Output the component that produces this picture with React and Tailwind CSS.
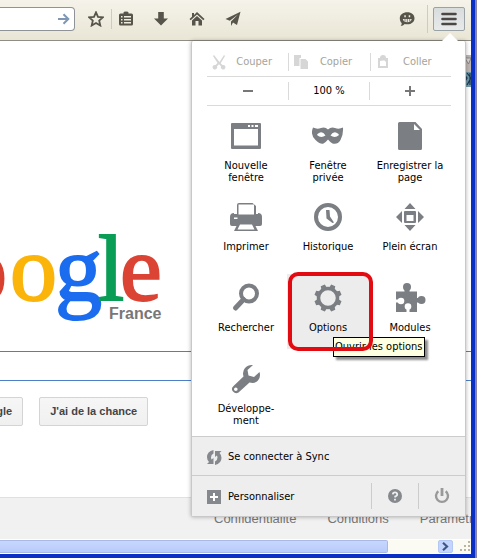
import React from 'react';

const uiFont = "font-['DejaVu_Sans_Condensed','DejaVu_Sans',sans-serif]";
const pageFont = "font-['Liberation_Sans',Arial,sans-serif]";

function ToolButton({ label, className, children }) {
  return (
    <button type="button" aria-label={label} className={`flex shrink-0 items-center justify-center text-[#57544b] ${className}`}>
      <svg width="16" height="16" viewBox="0 0 16 16" fill="currentColor" aria-hidden="true">
        {children}
      </svg>
    </button>
  );
}

function Toolbar() {
  return (
    <header className="flex h-[41px] items-center border-b border-[#8f8d85] bg-linear-to-b from-[#f5f3ea] to-[#e9e6d6] pr-[6px] pb-[2px]">
      <div className="flex h-6 w-[75px] items-center justify-end rounded-r-sm border border-l-0 border-[#8f9296] bg-white pr-1">
        <input aria-label="Adresse" className="h-5 w-0 flex-1 outline-none" />
        <button type="button" aria-label="Aller">
          <svg width="13" height="12" viewBox="0 0 13 12" fill="none" stroke="#7f97b3" strokeWidth="2" aria-hidden="true">
            <path d="M1 6h10M6.500 1.200 11.300 6 6.500 10.800" />
          </svg>
        </button>
      </div>
      <ToolButton label="Marque-page" className="ml-[13px]">
        <path d="M8 1.300l2 4.500 4.900.5-3.700 3.300 1.100 4.900L8 12l-4.300 2.500 1.100-4.900L1.100 6.300 6 5.800z" fill="none" stroke="currentColor" strokeWidth="1.800" />
      </ToolButton>
      <span className="ml-[7px] h-5 w-px bg-[#cfccbf]" />
      <ToolButton label="Liste des marque-pages" className="ml-[6px]">
        <path fillRule="evenodd" d="M2.500 2.500H5.500V1.500Q5.500 .5 8 .5T10.500 1.500V2.500H13.500Q15 2.500 15 4V13Q15 14.500 13.500 14.500H2.500Q1 14.500 1 13V4Q1 2.500 2.500 2.500zM3 5V6.500H4.500V5zM6 5V6.500H13V5zM3 8V9.500H4.500V8zM6 8V9.500H13V8zM3 11V12.500H4.500V11zM6 11V12.500H13V11z" />
      </ToolButton>
      <ToolButton label="Téléchargements" className="ml-[19px]">
        <path d="M5.200 1h5.600v6.500H15L8 14.500 1 7.500h4.200z" />
      </ToolButton>
      <ToolButton label="Accueil" className="ml-5">
        <path d="M8 1 15.500 8l-1.200 1.300L8 3.500 1.700 9.300.5 8 3 5.700V2h2v2zM3 9.500 8 5l5 4.500v5H9.500V10h-3v4.500H3z" />
      </ToolButton>
      <ToolButton label="Partager" className="ml-5">
        <path d="M15.500.8 12 14 8 11.500 6 15V10.500L13 3.500 4.800 9.700.5 8z" />
      </ToolButton>
      <ToolButton label="Discussion" className="mr-[12px] ml-auto">
        <path fillRule="evenodd" d="M8.300 1.200c4.300 0 7.200 2.500 7.200 6s-2.900 6.100-7.200 6.100c-1 0-1.900-.1-2.600-.3-1 1.200-2.500 2-4.200 2 .8-.8 1.200-1.700 1.200-3C1.500 10.900.8 9.300.8 7.200c0-3.500 3.200-6 7.500-6zM5.300 4.300v2h1.500V4.300zM9.700 4.300v2h1.500V4.300zM3.800 8c.5 2.200 2.200 3.300 4.500 3.300S12.200 10.200 12.700 8z" />
        <path d="M6 8v2.500M8.300 8v3.300M10.700 8v2.500" stroke="currentColor" strokeWidth="0.700" />
      </ToolButton>
      <span className="mr-[5px] h-7 w-px bg-[#cfccbf]" />
      <button type="button" aria-label="Ouvrir le menu" className="flex h-6 w-8 shrink-0 items-center justify-center rounded-xs border border-[#9ba2a6] bg-linear-to-b from-[#d9dcdd] to-[#e8eaea]">
        <svg width="16" height="14" viewBox="0 0 16 14" stroke="#4b4744" strokeWidth="2.600" strokeLinecap="round" aria-hidden="true">
          <path d="M1.500 2h13M1.500 7h13M1.500 12h13" />
        </svg>
      </button>
    </header>
  );
}

function Logo() {
  return (
    <svg width="170" height="100" viewBox="0 0 170 100" role="img" aria-label="Google France" className="block">
      <g fontFamily="'Liberation Serif', serif" fontSize="94" strokeWidth="2">
        <text x="-40" y="70" fill="#d8402f" stroke="#d8402f">o</text>
        <text x="10" y="70" fill="#fbb40a" stroke="#fbb40a">o</text>
        <text x="55" y="70" fill="#1b6cee" stroke="#1b6cee">g</text>
        <text x="98" y="70" fill="#0a9d55" stroke="#0a9d55">l</text>
        <text x="120" y="70" fill="#db4434" stroke="#db4434">e</text>
      </g>
      <text x="109" y="89" fill="#777777" fontFamily="'Liberation Sans', Arial, sans-serif" fontSize="16" fontWeight="bold">France</text>
    </svg>
  );
}

function SearchPage() {
  const button = 'h-[29px] shrink-0 rounded-xs border border-[#d4d4d4] bg-linear-to-b from-[#f6f6f6] to-[#f0f0f0] px-[10px] text-[11px] font-bold whitespace-nowrap text-[#444]';
  return (
    <main className={`flex flex-1 flex-col overflow-hidden bg-white ${pageFont}`}>
      <div className="flex h-[46px] items-end justify-end">
        <svg width="7" height="32" viewBox="0 0 7 32" aria-hidden="true">
          <path d="M0 0h7v17H0z" fill="#bdb5b1" />
          <path d="M1 3h6L4.500 9z" fill="#d6d3d2" stroke="#777" strokeWidth="0.800" />
          <path d="M0 17h7v15H0z" fill="#6f98a6" />
          <path d="M0 19l3 4-3 5M3 18l4 5-4 7M6 18v12" stroke="#1d3450" strokeWidth="1.200" fill="none" />
        </svg>
      </div>
      <div className="mt-[143px]">
        <Logo />
      </div>
      <input aria-label="Rechercher" className="mt-[21px] h-[30px] w-full border-y border-[#4c7fc8] px-2 outline-none" />
      <div className="mt-4 flex gap-4">
        <button type="button" className={`-ml-24 ${button}`}>Recherche Google</button>
        <button type="button" className={button}>J'ai de la chance</button>
      </div>
      <footer className="mt-auto flex h-[42px] items-center gap-[31px] overflow-hidden border-t border-[#e0e0e0] bg-[#f1f1f1] pl-[214px] text-[13px] whitespace-nowrap text-[#777]">
        <a href="#confidentialite">Confidentialité</a>
        <a href="#conditions">Conditions</a>
        <a href="#parametres">Paramètres</a>
      </footer>
    </main>
  );
}

function ScrollBar() {
  return (
    <div className="flex h-[15px] items-stretch border-y border-white bg-[#fbfaf3]">
      <div className="w-[388px] rounded-r-xs border border-l-0 border-[#a9b8e6] bg-linear-to-b from-[#c6d7ff] to-[#b8ccfa]" />
      <button type="button" aria-label="Défiler à droite" className="mr-[6px] ml-auto flex w-[15px] items-center justify-center rounded-xs border border-[#b4c8f4] bg-[#c4d5fd]">
        <svg width="7" height="9" viewBox="0 0 7 9" fill="none" stroke="#3f5583" strokeWidth="2.200" aria-hidden="true">
          <path d="M1 .8 5 4.500 1 8.200" />
        </svg>
      </button>
      <svg width="12" height="13" viewBox="0 0 12 13" fill="#b9b59f" aria-hidden="true">
        <path d="M9 1h2v2H9zM5 5h2v2H5zM9 5h2v2H9zM1 9h2v2H1zM5 9h2v2H5zM9 9h2v2H9z" />
      </svg>
    </div>
  );
}

function EditButton({ label, icon, first }) {
  return (
    <button type="button" disabled className={`flex h-[18px] items-center pr-[7px] pl-1 text-[#a5a499] ${first ? '' : 'border-l border-[#dadada]'}`}>
      <svg width="16" height="16" viewBox="0 0 16 16" className="shrink-0 text-[#d6d6d6]" fill="currentColor" aria-hidden="true">
        {icon}
      </svg>
      <span className="flex-1 text-center">{label}</span>
    </button>
  );
}

const gearAngles = [22.5, 67.5, 112.5, 157.5, 202.5, 247.5, 292.5, 337.5];

const icons = {
  window: <path fillRule="evenodd" d="M2 3h28a1 1 0 011 1v24a1 1 0 01-1 1H2a1 1 0 01-1-1V4a1 1 0 011-1zM4 9v16.500h24V9zM18 5v2h2V5zM21.500 5v2h2V5zM25 5v2h3V5z" />,
  mask: <path fillRule="evenodd" d="M1 7.500Q5 9.500 9 8T16 9.500Q19 6.500 23 8T31 7.500Q31.500 15 28.500 20T20.500 23.500Q18 22 16 19.500Q14 22 11.500 23.500T3.500 20 1 7.500zM5 15Q9 18.500 13.500 15.500Q11 11.500 8 12.500T5 15zM27 15Q23 18.500 18.500 15.500Q21 11.500 24 12.500T27 15z" />,
  page: <path fillRule="evenodd" d="M5.500 2H21.500L28 9V28.500Q28 30 26.500 30H5.500Q4 30 4 28.500V3.500Q4 2 5.500 2zM20 4V10H26z" />,
  printer: (
    <>
      <path d="M9 2H22.500L26 5V13H28V12Q32 12 32 16V23Q32 25 30 25H2Q0 25 0 23V16Q0 12 4 12V13H7V4Q7 2 9 2z" />
      <path d="M8.500 3.500H24V13.500H8.500zM4 16.500h3.500v1.500H4z" fill="#ffffff" />
      <path d="M8 22H24L28 30H4z" />
      <path d="M10 23.500H22L24.500 28.500H7.500z" fill="#ffffff" />
    </>
  ),
  clock: <><circle cx="16" cy="16" r="12" fill="none" stroke="currentColor" strokeWidth="4" /><path d="M14 9h3.500l.5 6.500 4 6-1.500.5-6-4.500z" /></>,
  fullscreen: <path fillRule="evenodd" d="M16 2l5.500 6h-11zM16 30l-5.500-6h11zM2 16l6-6v12zM30 16l-6-6v12zM11 10h10q1 0 1 1V21q0 1-1 1H11q-1 0-1-1V11q0-1 1-1zM12.500 14v6h7v-6z" />,
  search: <><circle cx="19" cy="11.500" r="8" fill="none" stroke="currentColor" strokeWidth="4" /><path d="M13.500 17.500 5.500 26" fill="none" stroke="currentColor" strokeWidth="5" strokeLinecap="round" /></>,
  gear: (
    <>
      <circle cx="16" cy="16" r="9.500" fill="none" stroke="currentColor" strokeWidth="3.500" />
      {gearAngles.map((angle) => (
        <path key={angle} d="M13 6.500 13.800 2.300h4.400L19 6.500z" transform={`rotate(${angle} 16 16)`} />
      ))}
    </>
  ),
  puzzle: (
    <>
      <path d="M2 9.500H10.500V6.500H15.500V9.500H23V16H27V20.500H23V30H2z" />
      <circle cx="13" cy="5" r="4" />
      <circle cx="27.500" cy="18" r="4" />
      <g fill="#ffffff">
        <circle cx="7" cy="19" r="3.300" />
        <path d="M1 17.500h5v3H1z" />
        <circle cx="14" cy="24.500" r="3.300" />
        <path d="M12.500 25h3v6h-3z" />
      </g>
    </>
  ),
  wrench: <path fillRule="evenodd" d="M23 2 17.500 7 18.500 12.500 24 14 29.500 9Q31 14 28 17.500T19.500 19.500L8.500 29.500Q5.500 31.500 3 28.500T3.500 23L13.500 13.500Q12 8.500 15 5T23 2zM5.800 24.500a1.800 1.800 0 100 3.600 1.800 1.800 0 000-3.600z" />,
};

const items = [
  { icon: 'window', lines: ['Nouvelle', 'fenêtre'] },
  { icon: 'mask', lines: ['Fenêtre', 'privée'] },
  { icon: 'page', lines: ['Enregistrer la', 'page'] },
  { icon: 'printer', lines: ['Imprimer'] },
  { icon: 'clock', lines: ['Historique'] },
  { icon: 'fullscreen', lines: ['Plein écran'] },
  { icon: 'search', lines: ['Rechercher'] },
  { icon: 'gear', lines: ['Options'], active: true },
  { icon: 'puzzle', lines: ['Modules'] },
  { icon: 'wrench', lines: ['Développe-', 'ment'] },
];

function MenuItem({ icon, lines, active }) {
  return (
    <div className="relative h-[81px]">
      <button type="button" className={`flex w-full flex-col items-center pt-2 ${active ? 'h-[75px] bg-[#ececec]' : 'h-full'}`}>
        <svg width="32" height="32" viewBox="0 0 32 32" fill="currentColor" className="shrink-0 text-[#7b7e82]" aria-hidden="true">
          {icons[icon]}
        </svg>
        <span className="mt-2 leading-[12px] whitespace-nowrap">
          {lines.map((line) => (
            <span key={line} className="block">{line}</span>
          ))}
        </span>
      </button>
      {active && (
        <>
          <div role="tooltip" className="absolute top-[63px] left-[46px] border border-black bg-[#ffffe1] px-px leading-[18px] whitespace-nowrap shadow-[3px_3px_2px_rgba(0,0,0,0.45)]">
            Ouvrir les options
          </div>
          <div className="pointer-events-none absolute -top-[2px] left-px h-[79px] w-[85px] rounded-[10px] border-4 border-[#e30b12]" />
        </>
      )}
    </div>
  );
}

function MenuPanel() {
  return (
    <nav aria-label="Menu" className={`absolute top-[41px] right-[5px] w-[275px] rounded-xs border border-t-0 border-[#c8c8c8] bg-white text-[11px] text-black shadow-[0_0_4px_rgba(0,0,0,0.3)] ${uiFont}`}>
      <svg width="18" height="9" viewBox="0 0 18 9" className="absolute -top-2 right-[6px]" aria-hidden="true">
        <path d="M0 9 9 0l9 9z" fill="#ffffff" />
      </svg>
      <div className="pr-[14px] pl-[15px]">
        <div className="grid grid-cols-3 border-b border-[#dadada] pt-3 pb-[5px]">
          <EditButton first label="Couper" icon={<path d="M3 1l5.500 7L13 1l1 1-4.300 7.300 1.800 1.700a2.300 2.300 0 11-1.500 1.300L8 10.300l-2 2A2.300 2.300 0 114.500 11l2-2L2 2z" />} />
          <EditButton label="Copier" icon={<path d="M1 1h7v3H6.500v8H1zM7.500 5h5L15 7.500V15H7.500z" />} />
          <EditButton label="Coller" icon={<path fillRule="evenodd" d="M3 4h2q0-3 3-3t3 3h2v10H3zM5 7v5h6V8L9.500 6.500H8z" />} />
        </div>
        <div className="grid grid-cols-3 border-b border-[#dadada] py-[5px]">
          <button type="button" aria-label="Zoom arrière" className="flex h-[18px] items-center justify-center">
            <svg width="12" height="12" viewBox="0 0 12 12" aria-hidden="true"><path d="M1 6h10" stroke="#77777a" strokeWidth="2" /></svg>
          </button>
          <button type="button" className="h-[18px] border-x border-[#dadada]">100 %</button>
          <button type="button" aria-label="Zoom avant" className="flex h-[18px] items-center justify-center">
            <svg width="12" height="12" viewBox="0 0 12 12" aria-hidden="true"><path d="M1 6h10M6 1v10" stroke="#77777a" strokeWidth="2" /></svg>
          </button>
        </div>
      </div>
      <div className="grid grid-cols-3 pt-[6px] pr-[14px] pl-[13px]">
        {items.map((item) => (
          <MenuItem key={item.icon} {...item} />
        ))}
      </div>
      <div className="bg-[#eeeeee]">
        <button type="button" className="flex h-[39px] w-full items-center gap-[6px] border-t border-[#cccccc] pt-[2px] pl-[15px]">
          <svg width="15" height="15" viewBox="0 0 15 15" fill="#85888c" aria-hidden="true">
            <path d="M6.500 0v3.500Q4 4.500 4 7.500q0 1.200.6 2L6.500 8V14H0L2 12Q0 10 0 7.300 0 1.500 6.500 0zM8 15v-3.500q2.500-1 2.500-4 0-1.200-.6-2L8 7V1h6.500L12.500 3q2 2 2 4.700Q14.500 13.500 8 15z" />
          </svg>
          Se connecter à Sync
        </button>
        <div className="flex h-[41px] items-center border-t border-[#cccccc]">
          <button type="button" className="flex h-full flex-1 items-center gap-[6px] pt-[2px] pl-[15px]">
            <svg width="15" height="15" viewBox="0 0 15 15" aria-hidden="true">
              <path d="M0 0h14v14H0z" fill="#85888c" />
              <path d="M3 7h8M7 3v8" stroke="#ffffff" strokeWidth="2" />
            </svg>
            Personnaliser
          </button>
          <button type="button" aria-label="Aide" className="flex h-[26px] w-[47px] items-center justify-center border-l border-[#cccccc]">
            <svg width="16" height="16" viewBox="0 0 16 16" fill="none" aria-hidden="true">
              <circle cx="8" cy="8" r="7" fill="#85888c" />
              <path d="M5.800 6.300Q6 4.300 8 4.300T10.200 6.100 8.200 8.500V9.500M8 10.800v1.700" stroke="#eeeeee" strokeWidth="1.800" />
            </svg>
          </button>
          <button type="button" aria-label="Quitter" className="flex h-[26px] w-[47px] items-center justify-center border-l border-[#cccccc]">
            <svg width="16" height="16" viewBox="0 0 16 16" fill="none" stroke="#98999b" aria-hidden="true">
              <path d="M4.300 3.200a6 6 0 107.400 0" strokeWidth="2.400" />
              <path d="M8 0v8" strokeWidth="2.800" />
            </svg>
          </button>
        </div>
      </div>
    </nav>
  );
}

export default function App() {
  return (
    <div className="flex min-h-screen bg-[#8583a8]">
      <div className="relative mr-[2px] flex min-w-0 flex-1 flex-col border-r-4 border-b-4 border-[#0a2fc4]">
        <Toolbar />
        <SearchPage />
        <ScrollBar />
        <MenuPanel />
      </div>
    </div>
  );
}
